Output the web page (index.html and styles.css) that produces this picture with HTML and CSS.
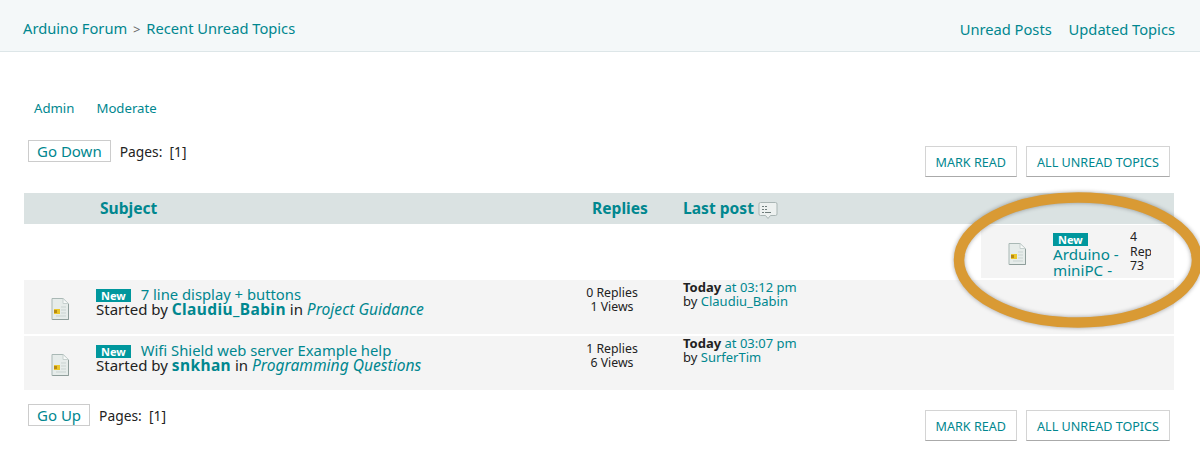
FILE: index.html
```html
<!DOCTYPE html>
<html lang="en">
<head>
    <meta charset="UTF-8">
    <meta name="viewport" content="width=device-width, initial-scale=1.0">
    <title>Recent Unread Topics</title>
    <link rel="stylesheet" href="styles.css">
</head>
<body>
    <header class="topbar">
        <div class="crumbs">
            <a href="#">Arduino Forum</a>
            <span class="crumb-sep">&gt;</span>
            <a href="#">Recent Unread Topics</a>
        </div>
        <nav class="toplinks">
            <a href="#">Unread Posts</a>
            <a href="#">Updated Topics</a>
        </nav>
    </header>

    <div class="content">
        <nav class="adminlinks">
            <a href="#">Admin</a>
            <a href="#">Moderate</a>
        </nav>

        <div class="pagebar pagebar-top">
            <div class="pager">
                <a class="jump" href="#">Go Down</a>
                <span class="pages">Pages:&nbsp; [<a href="#">1</a>]</span>
            </div>
            <div class="actions">
                <a class="btn" href="#">MARK READ</a>
                <a class="btn" href="#">ALL UNREAD TOPICS</a>
            </div>
        </div>

        <div class="topics">
            <div class="topic-head">
                <a class="th-subject" href="#">Subject</a>
                <a class="th-replies" href="#">Replies</a>
                <span class="th-last">
                    <a href="#">Last post</a>
                    <svg width="20" height="19" viewBox="0 0 20 19">
                        <path d="M2.500 1.500h15a1.500 1.500 0 0 1 1.500 1.500v10a1.500 1.500 0 0 1-1.500 1.500h-5l-2.500 3-2.500-3h-5a1.500 1.500 0 0 1-1.500-1.500v-10a1.500 1.500 0 0 1 1.500-1.500z" fill="#edf1f0" stroke="#a9b5b4"/>
                        <path d="M4 5.500h2M7 5.500h2M4 8.500h2M7 8.500h2M4 11.500h2M7 11.500h6" stroke="#6f7d7c" fill="none"/>
                    </svg>
                </span>
            </div>

            <div class="mini-wrap">
                <div class="mini-topic">
                    <svg class="doc-icon" width="18" height="22" viewBox="0 0 18 22">
                        <use href="#doc"/>
                    </svg>
                    <div class="mini-subject">
                        <span class="badge">New</span>
                        <a href="#">Arduino - miniPC - Linux</a>
                    </div>
                    <div class="mini-stats">4<br>Replies<br>73</div>
                </div>
            </div>

            <div class="topic-row">
                <div class="cell-icon">
                    <svg class="doc-icon" width="18" height="22" viewBox="0 0 18 22">
                        <defs>
                            <g id="doc">
                                <path d="M1 .5h11l5.500 5v16H1z" fill="#e6ecea" stroke="#a9b8b5"/>
                                <path d="M12 .5v5h5.500z" fill="#f8faf9" stroke="#c6d0ce"/>
                                <path d="M17.500 6v15.500H1.500" fill="none" stroke="#8f9e9b"/>
                                <path d="M10 9h5M10 12h5M10 15h5M5 18h10" stroke="#c9d3d1" fill="none"/>
                                <rect x="3" y="11" width="6" height="5" fill="#eac62c"/>
                                <rect x="3" y="12" width="3" height="3" fill="#b98a12"/>
                            </g>
                        </defs>
                        <use href="#doc"/>
                    </svg>
                </div>
                <div class="cell-subject">
                    <div class="topic-title"><span class="badge">New</span><a href="#">7 line display + buttons</a></div>
                    <div>Started by <a class="author" href="#">Claudiu_Babin</a> in <a class="board" href="#">Project Guidance</a></div>
                </div>
                <div class="cell-stats">0 Replies<br>1 Views</div>
                <div class="cell-last">
                    <b>Today</b> <a href="#">at 03:12 pm</a><br>
                    by <a href="#">Claudiu_Babin</a>
                </div>
            </div>

            <div class="topic-row">
                <div class="cell-icon">
                    <svg class="doc-icon" width="18" height="22" viewBox="0 0 18 22">
                        <use href="#doc"/>
                    </svg>
                </div>
                <div class="cell-subject">
                    <div class="topic-title"><span class="badge">New</span><a href="#">Wifi Shield web server Example help</a></div>
                    <div>Started by <a class="author" href="#">snkhan</a> in <a class="board" href="#">Programming Questions</a></div>
                </div>
                <div class="cell-stats">1 Replies<br>6 Views</div>
                <div class="cell-last">
                    <b>Today</b> <a href="#">at 03:07 pm</a><br>
                    by <a href="#">SurferTim</a>
                </div>
            </div>
        </div>

        <div class="pagebar pagebar-bottom">
            <div class="pager">
                <a class="jump" href="#">Go Up</a>
                <span class="pages">Pages:&nbsp; [<a href="#">1</a>]</span>
            </div>
            <div class="actions">
                <a class="btn" href="#">MARK READ</a>
                <a class="btn" href="#">ALL UNREAD TOPICS</a>
            </div>
        </div>
    </div>

    <!-- hand drawn highlight over the screenshot -->
    <svg class="highlight" width="260" height="146" viewBox="0 0 260 146">
        <ellipse cx="125" cy="73" rx="119" ry="62.500" fill="none" stroke="#d99a34" stroke-width="10.500"/>
    </svg>
</body>
</html>
```

FILE: styles.css
```css
body {
    margin: 0;
    font-family: "Noto Sans", Arial, sans-serif;
    font-size: 14px;
    color: #222;
    background-color: #fff;
    overflow: hidden;
}
a {
    color: #00878f;
    text-decoration: none;
}

/* Top bar */
.topbar {
    display: flex;
    justify-content: space-between;
    align-items: center;
    height: 52px;
    padding: 6px 25px 0 23px;
    box-sizing: border-box;
    background-color: #f4f8f9;
    border-bottom: 1px solid #dde6e8;
    font-size: 14.700px;
    line-height: 20px;
}
.crumb-sep {
    margin: 0 2px;
    color: #666;
    font-size: 13px;
}
.toplinks a {
    margin-left: 13px;
}

.content {
    padding: 0 26px 0 24px;
}

.adminlinks {
    display: flex;
    gap: 22px;
    padding: 46px 0 0 10px;
    font-size: 13.200px;
    line-height: 20px;
}

/* Pager and buttons */
.pagebar {
    display: flex;
    justify-content: space-between;
    align-items: flex-start;
    padding-left: 4px;
}
.pagebar-top {
    margin-top: 22px;
    height: 53px;
}
.pagebar-bottom {
    margin-top: 14px;
}
.pager {
    display: flex;
    align-items: center;
    gap: 9px;
}
.jump {
    padding: 0 8px;
    height: 20px;
    line-height: 20px;
    border: 1px solid #ccc;
    font-size: 15px;
}
.pages {
    font-size: 13.800px;
}
.pages a {
    color: #222;
}
.actions {
    display: flex;
    gap: 9px;
    margin-top: 6px;
    padding-right: 4px;
}
.btn {
    height: 29px;
    line-height: 32px;
    padding: 0 10px;
    border: 1px solid #d4d4d4;
    border-bottom-color: #aaa;
    font-size: 12.600px;
}

/* Topic table */
.topic-head, .topic-row {
    display: grid;
    grid-template-columns: 72px 464px 104px 1fr;
}
.topic-head {
    height: 31px;
    align-items: center;
    background-color: #dae2e2;
    font-size: 15.600px;
    font-weight: bold;
    line-height: 29px;
}
.th-subject {
    grid-column: 2;
    margin-left: 4px;
}
.th-replies {
    text-align: center;
    padding-left: 16px;
}
.th-last {
    display: flex;
    align-items: center;
    gap: 4px;
    padding-left: 19px;
}
.th-last svg {
    margin-top: 3px;
}

.mini-wrap {
    display: flex;
    justify-content: flex-end;
    height: 56px;
    padding-top: 1px;
    box-sizing: border-box;
}
.mini-topic {
    display: flex;
    width: 193px;
    height: 53px;
    overflow: hidden;
    background-color: #f4f4f4;
}
.mini-topic .doc-icon {
    margin: 18px 0 0 27px;
    flex: none;
}
.mini-subject {
    width: 72px;
    margin: 8px 0 0 27px;
    flex: none;
    font-size: 15.200px;
    line-height: 16px;
}
.mini-subject .badge {
    display: block;
    width: fit-content;
    margin: 0;
}
.mini-stats {
    width: 21px;
    margin: 5px 0 0 5px;
    flex: none;
    overflow: hidden;
    font-size: 12.300px;
    line-height: 14.500px;
}

.topic-row {
    height: 54px;
    margin-bottom: 2px;
    background-color: #f4f4f4;
}
.cell-icon {
    display: flex;
    justify-content: center;
    padding: 18px 0 0 0;
    margin-left: -1px;
}
.cell-subject {
    padding-top: 7px;
    font-size: 15px;
    line-height: 15px;
    white-space: nowrap;
}
.topic-title a {
    font-size: 14.800px;
}
.badge {
    display: inline-block;
    margin-right: 10px;
    padding: 0 5px;
    height: 13px;
    line-height: 13px;
    background-color: #00979d;
    color: #fff;
    font-size: 11px;
    font-weight: bold;
}
.author {
    font-size: 15.500px;
    font-weight: bold;
    letter-spacing: .4px;
}
.board {
    font-size: 15.600px;
    font-style: italic;
}
.cell-stats {
    padding-top: 6px;
    text-align: center;
    font-size: 12.300px;
    line-height: 14px;
}
.cell-last {
    padding: 0 0 0 19px;
    font-size: 13px;
    line-height: 14px;
}

.highlight {
    position: absolute;
    left: 953px;
    top: 187px;
    filter: drop-shadow(0 0 2px rgba(0, 0, 0, .35));
}
```
